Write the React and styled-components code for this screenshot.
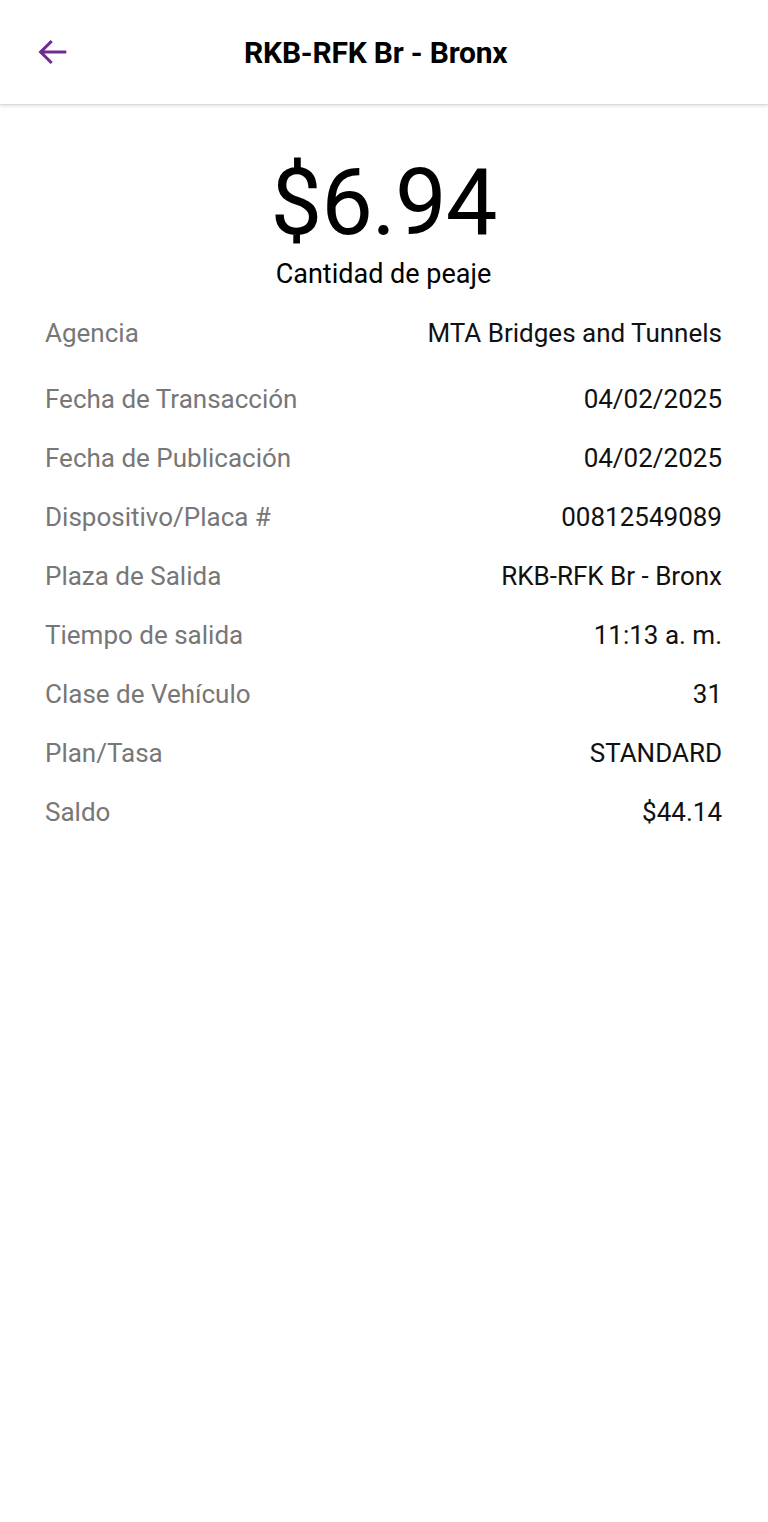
import React from "react";
import styled, { createGlobalStyle } from "styled-components";

const Global = createGlobalStyle`
  html, body { margin: 0; padding: 0; background: #ffffff; }
  body { font-family: Roboto, "Noto Sans", sans-serif; -webkit-font-smoothing: antialiased; }
  #root { min-height: 1522px; background: #ffffff; }
`;

const Screen = styled.div`
  width: 768px;
  min-height: 1522px;
  background: #fff;
  display: flex;
  flex-direction: column;
`;

const AppBar = styled.header`
  height: 104px;
  display: flex;
  align-items: center;
  position: relative;
  background: #fff;
  box-shadow: 0 2px 4px rgba(0, 0, 0, 0.12), 0 1px 1px rgba(0,0,0,0.06);
  z-index: 1;
`;

const BackButton = styled.button`
  width: 104px;
  height: 104px;
  border: none;
  background: transparent;
  padding: 0 0 0 35px;
  display: flex;
  align-items: center;
  cursor: pointer;
`;

const Title = styled.h1`
  flex: 1;
  margin: 0 0 0 140px;
  font-family: Roboto, sans-serif;
  font-weight: 700;
  font-size: 30px;
  letter-spacing: -0.2px;
  color: #000;
  text-align: left;
`;

const Content = styled.main`
  display: flex;
  flex-direction: column;
  padding: 42px 46px 0 45px;
`;

const Amount = styled.div`
  text-align: center;
  font-size: 92px;
  font-weight: 400;
  line-height: 113px;
  color: #000;
  letter-spacing: -1px;
`;

const AmountLabel = styled.div`
  text-align: center;
  font-size: 27px;
  line-height: 30px;
  color: #000;
  margin-bottom: 14px;
`;

const Rows = styled.div`
  display: flex;
  flex-direction: column;
`;

const Row = styled.div`
  display: flex;
  justify-content: space-between;
  align-items: center;
  height: 59px;
  margin-bottom: ${(p) => (p.$first ? "7px" : "0")};
`;

const Label = styled.span`
  font-size: 26px;
  color: #777777;
`;

const Value = styled.span`
  font-size: 26px;
  color: #111;
  text-align: right;
`;

const rows = [
  ["Agencia", "MTA Bridges and Tunnels"],
  ["Fecha de Transacción", "04/02/2025"],
  ["Fecha de Publicación", "04/02/2025"],
  ["Dispositivo/Placa #", "00812549089"],
  ["Plaza de Salida", "RKB-RFK Br - Bronx"],
  ["Tiempo de salida", "11:13 a. m."],
  ["Clase de Vehículo", "31"],
  ["Plan/Tasa", "STANDARD"],
  ["Saldo", "$44.14"],
];

export default function App() {
  return (
    <Screen>
      <Global />
      <AppBar>
        <BackButton aria-label="Atrás">
          <svg width="34" height="34" viewBox="0 0 24 24" fill="none">
            <path d="M21 12H4.5M11 5l-7 7 7 7" stroke="#6f2c91" strokeWidth="2.2" strokeLinecap="square" />
          </svg>
        </BackButton>
        <Title>RKB-RFK Br - Bronx</Title>
      </AppBar>
      <Content>
        <Amount>$6.94</Amount>
        <AmountLabel>Cantidad de peaje</AmountLabel>
        <Rows>
          {rows.map(([l, v], i) => (
            <Row key={l} $first={i === 0}>
              <Label>{l}</Label>
              <Value>{v}</Value>
            </Row>
          ))}
        </Rows>
      </Content>
    </Screen>
  );
}
